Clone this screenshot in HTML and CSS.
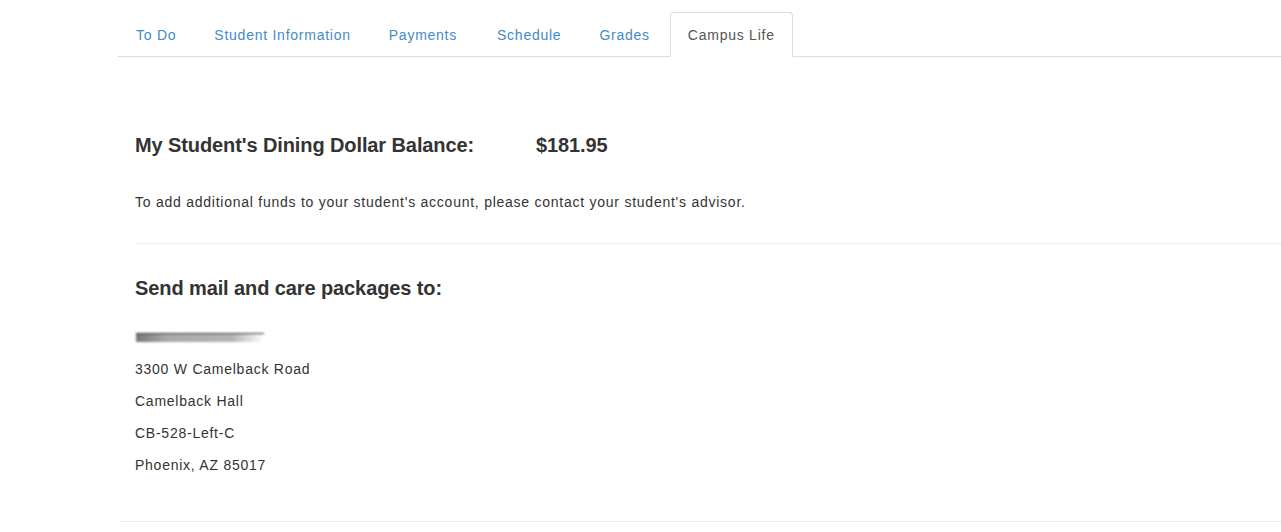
FILE: index.html
```html
<!DOCTYPE html>
<html lang="en">
<head>
  <meta charset="UTF-8" />
  <title>Campus Life</title>
  <meta name="viewport" content="width=device-width, initial-scale=1" />
  <link rel="stylesheet" href="styles.css">
</head>
<body>
  <div class="container">
    <ul class="nav-tabs">
      <li><a href="#">To Do</a></li>
      <li><a href="#">Student Information</a></li>
      <li class="wide"><a href="#">Payments</a></li>
      <li><a href="#">Schedule</a></li>
      <li><a href="#">Grades</a></li>
      <li class="active"><a href="#">Campus Life</a></li>
    </ul>

    <div class="tab-content">
      <div class="balance">
        <h3 class="balance-label">My Student's Dining Dollar Balance:</h3>
        <h3 class="balance-amount">$181.95</h3>
      </div>
      <p class="note">To add additional funds to your student's account, please contact your student's advisor.</p>

      <hr class="divider" />

      <h3 class="mail-title">Send mail and care packages to:</h3>
      <div class="redacted"></div>
      <div class="address">
        <p>3300 W Camelback Road</p>
        <p>Camelback Hall</p>
        <p>CB-528-Left-C</p>
        <p>Phoenix, AZ 85017</p>
      </div>
    </div>
  </div>
</body>
</html>
```

FILE: styles.css
```css
html, body {
  margin: 0;
  padding: 0;
  background: #fff;
}

body {
  font-family: 'Liberation Sans', Arial, sans-serif;
  font-size: 14px;
  line-height: 20px;
  letter-spacing: 0.75px;
  color: #333;
}

.container {
  padding-left: 118px;
}

.nav-tabs {
  display: flex;
  list-style: none;
  margin: 12px 0 0 0;
  padding: 0;
  border-bottom: 1px solid #ddd;
}

.nav-tabs li {
  margin-bottom: -1px;
  margin-right: 2px;
}

.nav-tabs a {
  display: block;
  padding: 12px 17px 11px;
  border: 1px solid transparent;
  border-radius: 4px 4px 0 0;
  color: #428bca;
  text-decoration: none;
}

.nav-tabs .wide a {
  padding-right: 19px;
}

.nav-tabs .active a {
  color: #555;
  background: #fff;
  border-color: #ddd #ddd transparent;
}

.tab-content {
  padding: 0 0 46px 17px;
  border-bottom: 1px solid #eee;
  border-bottom-left-radius: 4px;
}

.balance {
  display: grid;
  grid-template-columns: 401px auto;
  margin-top: 77px;
}

h3 {
  margin: 0;
  font-size: 20px;
  line-height: 22px;
  font-weight: bold;
  letter-spacing: -0.1px;
}

.note {
  margin: 36px 0 0;
}

.divider {
  margin: 31px 0 0;
  border: 0;
  border-top: 1px solid #eee;
}

.mail-title {
  margin-top: 33px;
}

.redacted {
  width: 128px;
  height: 8px;
  margin-top: 34px;
  margin-left: 1px;
  background: linear-gradient(to right, #777 0%, #aaa 25%, #b4b4b4 75%, rgba(220, 220, 220, 0) 100%);
  border-top: 1px solid #333;
  filter: blur(1.2px);
}

.address {
  margin-top: 17px;
}

.address p {
  margin: 0 0 12px;
}

.address p:last-child {
  margin-bottom: 0;
}
```
